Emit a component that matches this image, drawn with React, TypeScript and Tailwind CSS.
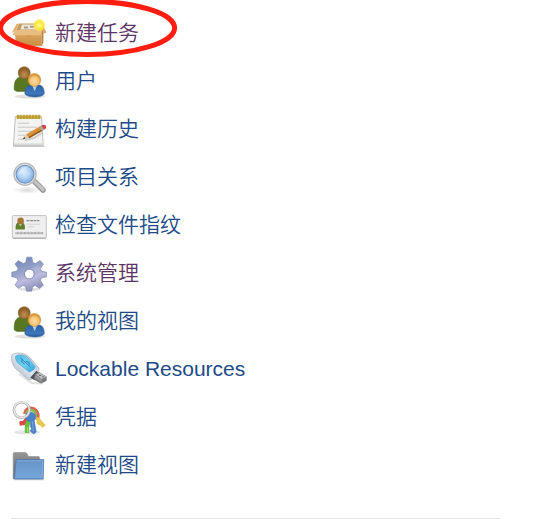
import type { ReactNode } from "react";

function BoxIcon() {
  return (
    <>
      <defs>
        <linearGradient id="boxFront" x1="0" y1="0" x2="0" y2="1">
          <stop offset="0" stopColor="#dfac68" />
          <stop offset="1" stopColor="#c88d43" />
        </linearGradient>
        <radialGradient id="spark">
          <stop offset="0" stopColor="#fffdb0" />
          <stop offset=".35" stopColor="#fff04a" />
          <stop offset=".7" stopColor="#f7e533" stopOpacity=".9" />
          <stop offset="1" stopColor="#fff04a" stopOpacity="0" />
        </radialGradient>
      </defs>
      <ellipse cx="19" cy="29.5" rx="14" ry="1.5" fill="#777" opacity=".35" />
      <path d="M8 7.5h22l2 7H5z" fill="#c99a5e" />
      <path d="M11 8.6h15l2.5 4.8h-19z" fill="#ece6dc" />
      <path d="M13 10.5h4v2h-4zm6-.8h4v2h-4z" fill="#a89a88" />
      <path d="M3.8 14.5h26.8v15.3H4.8z" fill="url(#boxFront)" />
      <path d="m30.6 14.5 1.8-2V27l-1.8 2.8z" fill="#b98242" />
      <path d="M8 7.5 5 14 .5 17.2 5.5 8z" fill="#e0b173" />
      <path d="M3.8 14h27l-1.2 5.2H1.4z" fill="#e8bd83" />
      <path d="m30.5 13.5 1.5-4 3.5 7.3-2.8.6z" fill="#dca863" />
      <path d="M15 19.5h6v1.2h-6z" fill="#d39b51" />
      <circle cx="28.3" cy="9.2" r="6.6" fill="url(#spark)" />
    </>
  );
}

function PeopleIcon() {
  return (
    <>
      <defs>
        <radialGradient id="brownHead" cx=".5" cy=".65">
          <stop offset="0" stopColor="#c39055" />
          <stop offset="1" stopColor="#8b5d22" />
        </radialGradient>
        <radialGradient id="blondHead" cx=".5" cy=".6">
          <stop offset="0" stopColor="#ffdda6" />
          <stop offset=".65" stopColor="#f6c374" />
          <stop offset="1" stopColor="#d9953a" />
        </radialGradient>
        <linearGradient id="blueBody" x1="0" y1="0" x2="0" y2="1">
          <stop offset="0" stopColor="#2861ad" />
          <stop offset=".7" stopColor="#3f75ba" />
          <stop offset="1" stopColor="#28599c" />
        </linearGradient>
      </defs>
      <ellipse cx="19" cy="32.5" rx="15" ry="2" fill="#888" opacity=".25" />
      <path d="M3.2 26c-.4-6 .8-11.5 5.5-13h9.5c3 3 4 9 2 14.5H6z" fill="#597720" stroke="#4c6819" strokeWidth=".5" />
      <circle cx="13.2" cy="8.8" r="6.1" fill="url(#brownHead)" stroke="#856030" strokeWidth=".5" />
      <path d="M13.8 30c0-5.5 2-9 6-9h8c4 0 5.6 4 5.5 9-3 3.9-16 4-19.5 0z" fill="url(#blueBody)" stroke="#2c5a97" strokeWidth=".5" />
      <path d="m21.4 22 2.2 5.2 2.2-5.2z" fill="#b9cde6" />
      <circle cx="23.4" cy="15.9" r="6.5" fill="url(#blondHead)" stroke="#cc8b3a" strokeWidth=".5" />
    </>
  );
}

function NotepadIcon() {
  return (
    <>
      <path d="M2 33.8h31.5v1.2H2z" fill="#999" opacity=".5" />
      <path d="M4.4 4.5h26.2l1.6 29H2.4z" fill="#f3f3f1" stroke="#b9bab7" strokeWidth=".9" />
      <path d="M2.8 31.4h29v1.8h-29z" fill="#d8d8d8" />
      <path d="M5.6 3.3h24v3.6h-24z" fill="#cfae38" />
      <path d="M7 2.7v4.3m3-4.3v4.3m3-4.3v4.3m3-4.3v4.3m3-4.3v4.3m3-4.3v4.3m3-4.3v4.3m3-4.3v4.3" stroke="#a38727" strokeWidth="1" />
      <path d="M7 11.2h11m-11 4h19m-19 4h14m-14 4h8m-8 4h6" stroke="#c9c9c9" strokeWidth="1" />
      <path d="m14 28 9-2 8-5" stroke="#888" strokeWidth="2" opacity=".35" fill="none" />
      <path d="m11.6 27.2 3.6-5 3 4z" fill="#e6cb9d" />
      <path d="m11.6 27.2 1.7-2.3 1.2 1.6z" fill="#333" />
      <path d="m15.2 22.2 14-8 2.6 4.2-13.6 7.8z" fill="#d79239" />
      <path d="m17.5 25 14-8 .5 1.4-13.8 7.9z" fill="#8d5a22" />
      <path d="m28.2 14.8 2.1-1.2 2.7 4.1-2.1 1.3z" fill="#a4a7a6" />
      <path d="m30.3 13.6 2-.7c2.5-.5 3.8 2.4 2.2 3.9l-1.5 1z" fill="#d8433f" />
    </>
  );
}

function SearchIcon() {
  return (
    <>
      <defs>
        <radialGradient id="lens" cx=".45" cy=".4">
          <stop offset="0" stopColor="#dcebfb" />
          <stop offset=".55" stopColor="#b9d7f6" />
          <stop offset="1" stopColor="#8fb9e8" />
        </radialGradient>
        <radialGradient id="lensShadow">
          <stop offset="0" stopColor="#777" stopOpacity=".3" />
          <stop offset="1" stopColor="#999" stopOpacity="0" />
        </radialGradient>
      </defs>
      <ellipse cx="16" cy="30" rx="15" ry="4" fill="url(#lensShadow)" />
      <path d="m24 22 8 8" stroke="#929392" strokeWidth="5.5" strokeLinecap="round" />
      <path d="m24 21.8 8 7.8" stroke="#c3c4c3" strokeWidth="3.6" strokeLinecap="round" />
      <path d="m24.2 24.5 6.7 6.5" stroke="#a1a2a1" strokeWidth=".8" />
      <circle cx="14" cy="14.3" r="11" fill="#ececec" stroke="#bcbdbb" strokeWidth="1.5" />
      <circle cx="14" cy="14.3" r="8.9" fill="url(#lens)" stroke="#6f97c4" strokeWidth="1.2" />
      <path d="M7.3 15c1-5.7 4-8.3 10.3-8.3-3.8 1.2-3.5 5.5-10.3 8.3z" fill="#fff" opacity=".35" />
    </>
  );
}

function IdCardIcon() {
  return (
    <>
      <rect x="1.3" y="7.6" width="34" height="22.4" rx="1" fill="#efefef" stroke="#c3c3c3" strokeWidth="1" />
      <path d="M2 30.3h33" stroke="#a2a2a2" strokeWidth=".9" />
      <path d="M4.6 21.5c-.3-5 1.2-7.4 4.6-7.4s5.3 2.4 4.6 7.4z" fill="#5f7f2a" />
      <path d="m8 16 1.4 2.4 1.4-2.4z" fill="#c3cbae" />
      <circle cx="9.6" cy="12.9" r="3.3" fill="#a9763a" />
      <path d="M15.5 12.7h13" stroke="#8d8d8d" strokeWidth="1.3" strokeDasharray="3 .5" />
      <path d="M16.5 16.2h12.3m-12.3 2.6h7" stroke="#cbcbcb" strokeWidth=".8" />
      <path d="M4.5 25.1h28" stroke="#a2a2a2" strokeWidth="2.3" strokeDasharray="1 .4" />
      <path d="M5 23.8h7m3 0h6m3 0h6" stroke="#ddd" strokeWidth=".7" />
    </>
  );
}

function GearIcon() {
  return (
    <>
      <defs>
        <linearGradient id="gear" x1=".2" y1="0" x2=".6" y2="1">
          <stop offset="0" stopColor="#6f84b5" />
          <stop offset=".42" stopColor="#98a3ca" />
          <stop offset=".65" stopColor="#bcbbdd" />
          <stop offset="1" stopColor="#888db7" />
        </linearGradient>
        <mask id="gearHole">
          <path d="M0 0h36v36H0z" fill="#fff" />
          <circle cx="18.3" cy="18" r="4.5" fill="#000" />
        </mask>
      </defs>
      <ellipse cx="18.3" cy="33.3" rx="11" ry="1.8" fill="#999" opacity=".3" />
      <g mask="url(#gearHole)">
        <path
          d="M15.7 1.2h5.1l1 5.3 2.7 1.1 4.5-3 3.4 3.3-3 4.6 1.1 2.8 5.2 1v4.5l-5.3 1-1.1 2.7 3 4.6-3.5 3.5-4.5-3.1-2.7 1.2-.9 4.5h-5.1l-1-4.6-2.7-1.1-4.5 3-3.4-3.4 3-4.6-1.2-2.8-5-1v-4.5l5.1-1.1 1.2-2.7-3.1-4.5 3.5-3.4 4.6 3 2.7-1.1z"
          fill="url(#gear)"
          stroke="#7f89b5"
          strokeWidth=".7"
          strokeLinejoin="round"
        />
        <path d="M6 20c7-7 14 1 24-7-1-2-2-3-3-4" fill="#fff" opacity=".12" />
      </g>
      <circle cx="18.3" cy="18" r="4.9" fill="none" stroke="#7d87b1" strokeWidth=".8" />
    </>
  );
}

function UsbIcon() {
  return (
    <>
      <defs>
        <linearGradient id="usbShell" x1="0" y1="1" x2="1" y2="0">
          <stop offset="0" stopColor="#97a3b4" />
          <stop offset=".5" stopColor="#e0e7f0" />
          <stop offset="1" stopColor="#a5b3c2" />
        </linearGradient>
        <linearGradient id="usbBlue" x1="0" y1="0" x2="1" y2="1">
          <stop offset="0" stopColor="#4fb5df" />
          <stop offset=".5" stopColor="#70d3f4" />
          <stop offset="1" stopColor="#2ea4df" />
        </linearGradient>
      </defs>
      <path d="m8 22 13 9 11 .5" stroke="#aaa" strokeWidth="2" opacity=".35" fill="none" />
      <path d="M1 2.8C5-.3 14 .6 18.5 5.2L27.8 16c1.4 3.8-3.8 9.7-7.7 11.4-1.5.6-3 .1-4.2-.9L3.8 15.8C1.1 12.4-.5 5.8 1 2.8z" fill="url(#usbShell)" stroke="#b0b8c2" strokeWidth=".8" />
      <path d="M4.5 4.2C8.5 1.8 14.5 3.2 17.3 6.3l7 8.4c-.6 2.6-3.4 4.6-6.2 5.2L7.2 11.4C5.2 9.6 4.2 6.6 4.5 4.2z" fill="url(#usbBlue)" stroke="#4b9cc5" strokeWidth=".5" />
      <path d="m9.2 5.8 10.4 9.2m-8-8-1.2 2.6 3.3 2.6m1.1-2.7 2.8.4 1 2.8" fill="none" stroke="#2c83b2" strokeWidth="1" />
      <path d="m19.2 25.8 6.2-7 2.9 2.4-4.5 7z" fill="#4a5159" />
      <path d="m24.2 21.8 4.3-1.6 7.3 4.6-.3 4.3-5.5 2.3-7.4-4z" fill="#77797b" />
      <path d="m25 22.2 4-1.3 6.4 4-4.8 2z" fill="#c0c1c1" />
      <path d="m27.5 23 1.4-.6 1.6 1-1.4.7zm3.4 1.7 1.3-.5 1.3.8-1.4.6z" fill="#505050" />
      <path d="m23.5 25.6 1.4-2.6 5.7 4v3.6z" fill="#969999" />
    </>
  );
}

function KeysIcon() {
  return (
    <>
      <ellipse cx="16" cy="32.3" rx="13" ry="2.2" fill="#aaa" opacity=".3" />
      <path d="m18 17-5 6-4.5.5" stroke="#d94a48" strokeWidth="4.4" fill="none" />
      <path d="m18.5 18-2.5 8v7" stroke="#66c13f" strokeWidth="4.4" fill="none" />
      <path d="m16.4 27 .2 5" stroke="#a3e080" strokeWidth="1" />
      <path d="m24 14 4 7 5.2 5.5m-4.6-4.5-2.2 2" stroke="#e5c650" strokeWidth="4.2" fill="none" />
      <path d="M13.8 14C14 7.5 21.5 6.4 25 10.4c1.8 2.2 2.4 4.5 1.8 7" stroke="#df6250" strokeWidth="3.2" fill="none" />
      <path d="M15 14.2c1.6-5.4 7.4-5.4 9.2-1.4.7 1.5.8 2.6.5 4" stroke="#80bd52" strokeWidth="2.6" fill="none" />
      <path d="M14.8 14.4c2.2-4.2 9.2-2.6 9.8 1.8.3 2-.3 3.2-1.4 4.4l2 11.4-2.6 2-3.4-3 1.4-2.6-1.4-2 .5-4.6c-4.8-1-6.4-4.6-4.9-7.4z" fill="#4c80c9" stroke="#3c6bad" strokeWidth=".5" />
      <path d="m21.2 21 1.2 10.5" stroke="#86a9dd" strokeWidth=".9" />
      <circle cx="10.7" cy="10" r="7.8" fill="none" stroke="#b0b2b0" strokeWidth="2.6" />
      <circle cx="10.7" cy="9.8" r="7.8" fill="none" stroke="#e7e8e6" strokeWidth="1.3" />
    </>
  );
}

function FolderIcon() {
  return (
    <>
      <defs>
        <linearGradient id="folderBack" x1="0" y1="0" x2="0" y2="1">
          <stop offset="0" stopColor="#969696" />
          <stop offset="1" stopColor="#606060" />
        </linearGradient>
        <linearGradient id="folderFront" x1="0" y1="0" x2="0" y2="1">
          <stop offset="0" stopColor="#6794c8" />
          <stop offset="1" stopColor="#76a5da" />
        </linearGradient>
      </defs>
      <path d="M3 31.7h30" stroke="#888" strokeWidth="1.3" opacity=".4" />
      <path d="M2.2 30.8V5.5q0-1 1-1h11.4q1 0 1.5 1.5l1.4 2.6h10.2q.8 0 .8 1v21.2z" fill="url(#folderBack)" stroke="#8d8d8d" strokeWidth=".6" />
      <path d="M5 11.6h27.7l-.5 19.3H3.4z" fill="url(#folderFront)" stroke="#4a78b1" strokeWidth=".8" strokeLinejoin="round" />
      <path d="M6 12.8h25.7l-.5 17" stroke="#8eb1dc" strokeWidth=".7" fill="none" />
    </>
  );
}

type Item = { label: string; icon: ReactNode; visited?: boolean };

const items: Item[] = [
  { label: "新建任务", icon: <BoxIcon />, visited: true },
  { label: "用户", icon: <PeopleIcon /> },
  { label: "构建历史", icon: <NotepadIcon /> },
  { label: "项目关系", icon: <SearchIcon /> },
  { label: "检查文件指纹", icon: <IdCardIcon /> },
  { label: "系统管理", icon: <GearIcon />, visited: true },
  { label: "我的视图", icon: <PeopleIcon /> },
  { label: "Lockable Resources", icon: <UsbIcon /> },
  { label: "凭据", icon: <KeysIcon /> },
  { label: "新建视图", icon: <FolderIcon /> },
];

export default function App() {
  return (
    <main className="relative h-[519px] w-full overflow-hidden bg-white pl-[11px] pt-[9px] font-['Liberation_Sans','Noto_Sans_CJK_SC',sans-serif] font-[350]">
      <nav>
        {items.map((item) => (
          <a key={item.label} className="flex h-12 items-center gap-2">
            <svg className="mt-px size-9 shrink-0" viewBox="0 0 36 36" aria-hidden="true">
              {item.icon}
            </svg>
            <span
              className={
                item.visited
                  ? "whitespace-nowrap text-[21px] leading-[30px] text-[#5c3566]"
                  : "whitespace-nowrap text-[21px] leading-[30px] text-[#204a87]"
              }
            >
              {item.label}
            </span>
          </a>
        ))}
      </nav>
      <hr className="mt-[29px] w-[489px] border-t border-[#e5e5e5]" />
      <svg className="absolute left-0 top-0" width="180" height="60" aria-hidden="true">
        <ellipse cx="87.6" cy="27.9" rx="87" ry="26.5" fill="none" stroke="#ff1d10" strokeWidth="5" />
      </svg>
    </main>
  );
}
